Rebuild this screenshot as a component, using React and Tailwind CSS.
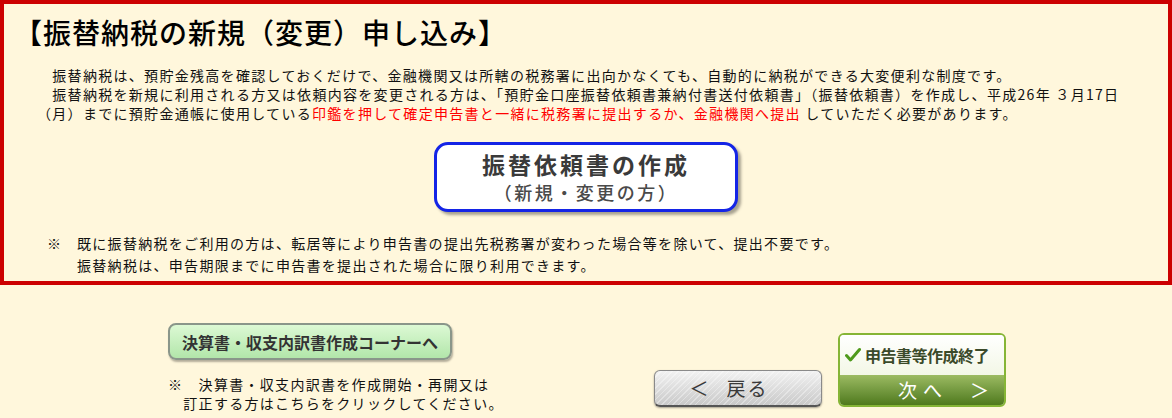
import React from "react";

const FONT = "font-['Noto_Sans_CJK_JP','Noto_Sans_CJK_SC',sans-serif]";

function CheckIcon() {
  return (
    <svg width="16" height="16" viewBox="0 0 16 16" className="shrink-0">
      <path d="M1.5 8.5 L5.5 13 L14.5 2.5" fill="none" stroke="#4f9a1c" strokeWidth="3" strokeLinecap="round" strokeLinejoin="round" />
    </svg>
  );
}

export default function App() {
  return (
    <div className={`w-[1172px] h-[418px] bg-[#fff7dc] text-[#111] ${FONT}`}>
      {/* 振替納税 box */}
      <section className="h-[285px] border-4 border-[#cc0000] pl-[10px] pt-[14px]">
        <h1 className="text-[28px] leading-[28px] tracking-[1px] font-medium text-black">
          【振替納税の新規（変更）申し込み】
        </h1>

        <div className="mt-[20px] pl-[23px] text-[14px] leading-[19px] tracking-[1.3px] whitespace-nowrap">
          <p>　振替納税は、預貯金残高を確認しておくだけで、金融機関又は所轄の税務署に出向かなくても、自動的に納税ができる大変便利な制度です。</p>
          <p>　振替納税を新規に利用される方又は依頼内容を変更される方は、「預貯金口座振替依頼書兼納付書送付依頼書」（振替依頼書）を作成し、平成26年 ３月17日</p>
          <p>
            （月）までに預貯金通帳に使用している
            <span className="text-[#ff0000]">印鑑を押して確定申告書と一緒に税務署に提出するか、金融機関へ提出</span>
            {" "}していただく必要があります。
          </p>
        </div>

        <div className="mt-[19px] flex justify-center pr-[10px]">
          <button className="w-[304px] h-[70px] rounded-[14px] border-[3px] border-[#1424e6] bg-white shadow-[3px_3px_3px_rgba(0,0,0,0.35)] flex flex-col items-center pt-[6px]">
            <span className="text-[23px] leading-[26px] tracking-[3px] font-bold text-[#3a3a3a]">振替依頼書の作成</span>
            <span className="mt-[5px] text-[18px] leading-[20px] tracking-[2.5px] font-medium text-[#4a4a4a]">（新規・変更の方）</span>
          </button>
        </div>

        <div className="mt-[20px] pl-[33px] text-[14px] leading-[22px] tracking-[1.3px] whitespace-nowrap">
          <p>
            <span className="inline-block w-[30px]">※</span>
            既に振替納税をご利用の方は、転居等により申告書の提出先税務署が変わった場合等を除いて、提出不要です。
          </p>
          <p className="pl-[30px]">振替納税は、申告期限までに申告書を提出された場合に限り利用できます。</p>
        </div>
      </section>

      {/* bottom navigation */}
      <div className="flex pl-[168px] pt-[38px]">
        <div className="w-[486px]">
          <button className="w-[284px] h-[37px] rounded-[8px] border-2 border-[#8a968a] bg-gradient-to-b from-[#dcf9d4] to-[#b2e6aa] shadow-[1px_2px_2px_rgba(0,0,0,0.3)] text-[16px] font-bold text-[#333]">
            決算書・収支内訳書作成コーナーへ
          </button>
          <div className="mt-[15px] text-[14px] leading-[19px] tracking-[1.3px] whitespace-nowrap">
            <p>※　決算書・収支内訳書を作成開始・再開又は</p>
            <p>　訂正する方はこちらをクリックしてください。</p>
          </div>
        </div>

        <button className="mt-[47px] w-[168px] h-[37px] rounded-[6px] border border-[#8a8a8a] border-b-2 border-b-[#555] bg-[repeating-linear-gradient(135deg,rgba(255,255,255,0.35)_0px,rgba(255,255,255,0.35)_1px,transparent_1px,transparent_4px),linear-gradient(to_bottom,#f2f2f2,#c9c9c9)] shadow-[0_1px_2px_rgba(0,0,0,0.35)] flex items-center justify-center pr-[18px] text-[19px] text-[#3a3a3a]">
          <span className="mr-[18px]">＜</span>
          <span className="tracking-[2px]">戻る</span>
        </button>

        <button className="ml-[16px] mt-[10px] w-[168px] h-[74px] rounded-[6px] border-2 border-[#86b536] overflow-hidden flex flex-col bg-white">
          <span className="h-[40px] flex items-center gap-[4px] pl-[5px] bg-gradient-to-b from-white to-[#f3f7e6] text-[16px] font-bold tracking-[-0.5px] text-[#3b4a2a]">
            <CheckIcon />
            申告書等作成終了
          </span>
          <span className="flex-1 flex items-center pl-[58px] bg-gradient-to-b from-[#9cbb62] to-[#4f7a1c] text-[19px] text-white">
            <span className="tracking-[6px]">次へ</span>
            <span className="ml-[22px]">＞</span>
          </span>
        </button>
      </div>
    </div>
  );
}
